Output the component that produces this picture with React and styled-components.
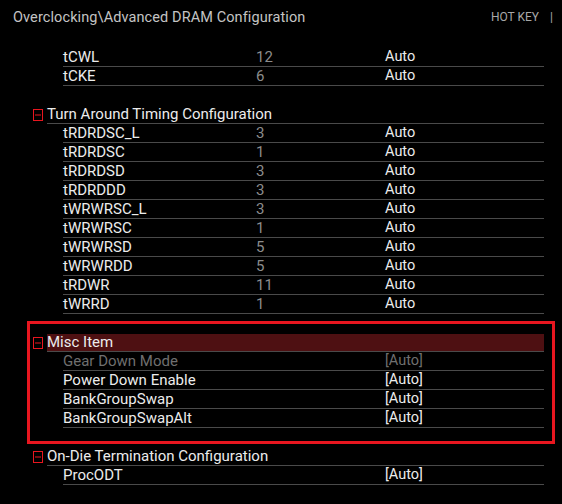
import React from "react";
import styled, { createGlobalStyle } from "styled-components";

const GlobalStyle = createGlobalStyle`
  html, body {
    margin: 0;
    padding: 0;
    background: #000;
  }
  body {
    font-family: Roboto, "Liberation Sans", sans-serif;
  }
`;

const Page = styled.div`
  width: 562px;
  height: 504px;
  overflow: hidden;
  background: #000;
  color: #e6e6e6;
`;

const TopBar = styled.div`
  height: 34px;
  padding: 0 9px 0 13px;
  display: flex;
  align-items: center;
  justify-content: space-between;
`;

const Title = styled.div`
  font-size: 14.5px;
  color: #c4c4c4;
  letter-spacing: 0.1px;
`;

const HotKey = styled.div`
  font-size: 12px;
  color: #a8a8a8;
  display: flex;
  gap: 11px;
`;

const List = styled.div`
  padding-top: 14px;
`;

const Section = styled.div`
  position: relative;
  margin-bottom: ${({ $last }) => ($last ? 0 : "19px")};

  ${({ $selected }) =>
    $selected &&
    `
    &::after {
      content: "";
      position: absolute;
      left: 27px;
      right: 7px;
      top: -12px;
      bottom: -16px;
      border: 3px solid #e8161f;
      pointer-events: none;
    }
  `}
`;

const HeaderRow = styled.div`
  display: flex;
  align-items: center;
  margin-left: 33px;
  width: 511px;
  height: 19px;
`;

const Toggle = styled.svg`
  width: 10px;
  height: 12px;
  flex: none;
  margin-right: 4px;
`;

const HeaderBody = styled.div`
  flex: 1;
  height: 17px;
  margin-top: 1px;
  line-height: 17px;
  font-size: 15px;
  color: #ececec;
  border-bottom: 1px solid #4a4a4a;
  background: ${({ $active }) => ($active ? "#4e1012" : "transparent")};
`;

const Row = styled.div`
  display: grid;
  grid-template-columns: 193px 129px 1fr;
  align-items: center;
  margin-left: 63px;
  width: 481px;
  height: 18px;
  border-bottom: 1px solid #4a4a4a;
  font-size: 15px;
  line-height: 18px;
`;

const Label = styled.span`
  color: ${({ $dim }) => ($dim ? "#6f6f6f" : "#ececec")};
`;

const Value = styled.span`
  color: #8c8c8c;
`;

const Option = styled.span`
  font-size: 14.5px;
  color: ${({ $dim }) => ($dim ? "#6f6f6f" : "#ececec")};
`;

const MinusBox = () => (
  <Toggle viewBox="0 0 10 12">
    <rect x="0.5" y="0.5" width="9" height="11" fill="none" stroke="#e8161f" />
    <line x1="2" y1="6" x2="8" y2="6" stroke="#e8161f" />
  </Toggle>
);

const sections = [
  {
    rows: [
      ["tCWL", "12", "Auto"],
      ["tCKE", "6", "Auto"],
    ],
  },
  {
    title: "Turn Around Timing Configuration",
    rows: [
      ["tRDRDSC_L", "3", "Auto"],
      ["tRDRDSC", "1", "Auto"],
      ["tRDRDSD", "3", "Auto"],
      ["tRDRDDD", "3", "Auto"],
      ["tWRWRSC_L", "3", "Auto"],
      ["tWRWRSC", "1", "Auto"],
      ["tWRWRSD", "5", "Auto"],
      ["tWRWRDD", "5", "Auto"],
      ["tRDWR", "11", "Auto"],
      ["tWRRD", "1", "Auto"],
    ],
  },
  {
    title: "Misc Item",
    selected: true,
    rows: [
      ["Gear Down Mode", "", "[Auto]", true],
      ["Power Down Enable", "", "[Auto]"],
      ["BankGroupSwap", "", "[Auto]"],
      ["BankGroupSwapAlt", "", "[Auto]"],
    ],
  },
  {
    title: "On-Die Termination Configuration",
    rows: [["ProcODT", "", "[Auto]"]],
  },
];

const App = () => (
  <>
    <GlobalStyle />
    <Page>
      <TopBar>
        <Title>Overclocking\Advanced DRAM Configuration</Title>
        <HotKey>
          <span>HOT KEY</span>
          <span>|</span>
        </HotKey>
      </TopBar>
      <List>
        {sections.map((s, i) => (
          <Section key={i} $selected={s.selected} $last={i === sections.length - 1}>
            {s.title && (
              <HeaderRow>
                <MinusBox />
                <HeaderBody $active={s.selected}>{s.title}</HeaderBody>
              </HeaderRow>
            )}
            {s.rows.map(([label, value, option, dim]) => (
              <Row key={label}>
                <Label $dim={dim}>{label}</Label>
                <Value>{value}</Value>
                <Option $dim={dim}>{option}</Option>
              </Row>
            ))}
          </Section>
        ))}
      </List>
    </Page>
  </>
);

export default App;
